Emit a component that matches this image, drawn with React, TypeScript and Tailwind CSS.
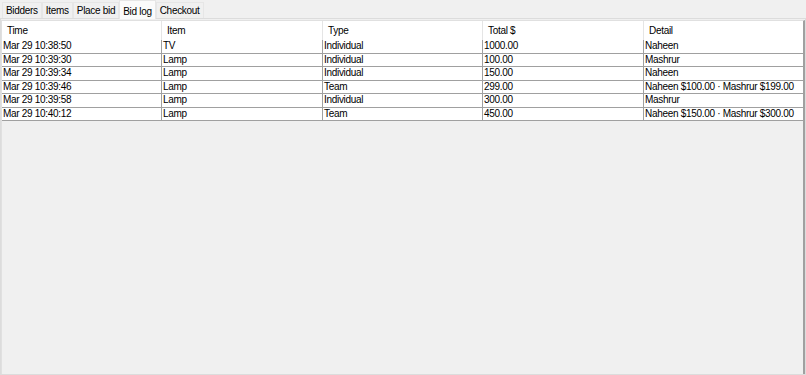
import React from "react";

const tabs = ["Bidders", "Items", "Place bid", "Bid log", "Checkout"];

const columns = ["Time", "Item", "Type", "Total $", "Detail"];

const rows = [
  ["Mar 29 10:38:50", "TV", "Individual", "1000.00", "Naheen"],
  ["Mar 29 10:39:30", "Lamp", "Individual", "100.00", "Mashrur"],
  ["Mar 29 10:39:34", "Lamp", "Individual", "150.00", "Naheen"],
  ["Mar 29 10:39:46", "Lamp", "Team", "299.00", "Naheen $100.00 · Mashrur $199.00"],
  ["Mar 29 10:39:58", "Lamp", "Individual", "300.00", "Mashrur"],
  ["Mar 29 10:40:12", "Lamp", "Team", "450.00", "Naheen $150.00 · Mashrur $300.00"],
];

const grid = "grid grid-cols-[160px_161px_160px_161px_1fr]";

const App = () => {
  return (
    <div
      className="flex h-[375px] w-[806px] flex-col overflow-hidden bg-[#f0f0f0] text-[10px] tracking-[-0.3px] text-black"
      style={{ fontFamily: '"Liberation Sans", Arial, sans-serif' }}
    >
      {/* tab bar */}
      <div className="flex h-[18px] items-end pl-[2px]">
        {tabs.map((t) =>
          t === "Bid log" ? (
            <div
              key={t}
              className="relative z-10 -mb-px flex h-[19px] items-start border border-b-0 border-[#e6e6e6] bg-[#fbfbfb] px-[3px] pt-[3px]"
            >
              {t}
            </div>
          ) : (
            <div
              key={t}
              className="flex h-[16px] items-center border border-b-0 border-[#e6e6e6] bg-[#f0f0f0] px-[3px]"
            >
              {t}
            </div>
          )
        )}
      </div>

      {/* pane */}
      <div className="flex flex-1 flex-col border border-[#dcdcdc] bg-[#f0f0f0] pt-px">
        <div className="flex flex-1 flex-col border-r-2 border-r-[#a0a0a0] border-l border-l-[#e0e0e0] border-t border-t-[#e0e0e0]">
          {/* header */}
          <div className={`${grid} h-[19px] bg-white`}>
            {columns.map((c, i) => (
              <div
                key={c}
                className={`flex items-center pl-[5px] ${i < 4 ? "border-r border-[#e5e5e5]" : ""}`}
              >
                {c}
              </div>
            ))}
          </div>
          {/* rows */}
          {rows.map((r, ri) => (
            <div key={ri} className={`${grid} h-[13.5px] bg-white`}>
              {r.map((v, i) => (
                <div
                  key={i}
                  className={`flex items-center overflow-hidden whitespace-nowrap border-b border-[#a0a0a0] pl-[1px] leading-none ${
                    i < 4 ? "border-r" : ""
                  }`}
                >
                  {v}
                </div>
              ))}
            </div>
          ))}
          <div className="flex-1" />
        </div>
      </div>
    </div>
  );
};

export default App;
